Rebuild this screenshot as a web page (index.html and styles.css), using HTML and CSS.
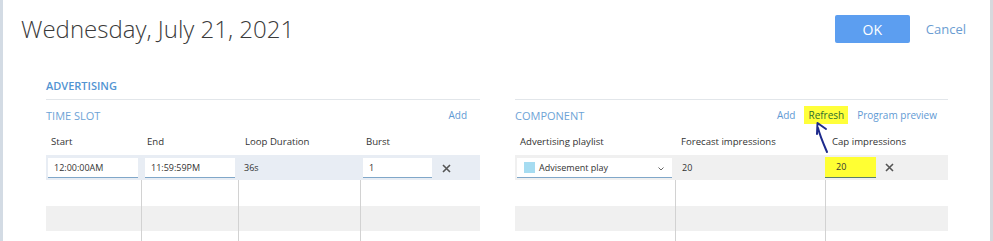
FILE: index.html
```html
<!DOCTYPE html>
<html>
<head>
<meta charset="utf-8">
<link rel="stylesheet" href="styles.css">
</head>
<body>
<div class="frame">
  <div class="header">
    <h1 class="title">Wednesday, July 21, 2021</h1>
    <div class="actions">
      <button class="btn-ok">OK</button>
      <a class="cancel">Cancel</a>
    </div>
  </div>
  <div class="panels">
    <div class="panel">
      <div class="panel-head">ADVERTISING</div>
      <div class="sub-head">
        <span class="sub-title">TIME SLOT</span>
        <div class="links"><a class="link">Add</a></div>
      </div>
      <div class="table t-left">
        <div class="row cols">
          <div class="th">Start</div>
          <div class="th">End</div>
          <div class="th">Loop Duration</div>
          <div class="th">Burst</div>
        </div>
        <div class="row body r1 blue">
          <div class="td c-start"><div class="input">12:00:00AM</div></div>
          <div class="td c-end"><div class="input">11:59:59PM</div></div>
          <div class="td c-text">36s</div>
          <div class="td c-burst"><div class="input w-burst">1</div><span class="x"><svg width="9" height="9" viewBox="0 0 9 9"><path d="M1 1L8 8M8 1L1 8" stroke="#555" stroke-width="1.6"/></svg></span></div>
        </div>
        <div class="row body r2 lined"><div class="td"></div><div class="td"></div><div class="td"></div><div class="td"></div></div>
        <div class="row body r3 grey lined"><div class="td"></div><div class="td"></div><div class="td"></div><div class="td"></div></div>
        <div class="row body r4 lined"><div class="td"></div><div class="td"></div><div class="td"></div><div class="td"></div></div>
      </div>
    </div>
    <div class="panel">
      <div class="panel-head"></div>
      <div class="sub-head right-sub">
        <span class="sub-title">COMPONENT</span>
        <div class="links">
          <a class="link">Add</a>
          <a class="link hl">Refresh</a>
          <a class="link">Program preview</a>
        </div>
      </div>
      <div class="table t-right">
        <div class="row cols">
          <div class="th">Advertising playlist</div>
          <div class="th">Forecast impressions</div>
          <div class="th">Cap impressions</div>
        </div>
        <div class="row body r1 grey">
          <div class="td c-select"><div class="input select"><span class="swatch"></span><span class="sel-text">Advisement play</span><svg class="chev" width="6" height="4" viewBox="0 0 6 4"><path d="M0.5 0.5L3 3L5.5 0.5" fill="none" stroke="#666" stroke-width="1"/></svg></div></div>
          <div class="td c-text2">20</div>
          <div class="td c-cap"><div class="input yellow">20</div><span class="x"><svg width="9" height="9" viewBox="0 0 9 9"><path d="M1 1L8 8M8 1L1 8" stroke="#555" stroke-width="1.6"/></svg></span></div>
        </div>
        <div class="row body r2 lined"><div class="td"></div><div class="td"></div><div class="td"></div></div>
        <div class="row body r3 grey lined"><div class="td"></div><div class="td"></div><div class="td"></div></div>
        <div class="row body r4 lined"><div class="td"></div><div class="td"></div><div class="td"></div></div>
      </div>
    </div>
  </div>
  <svg class="arrow" width="30" height="40" viewBox="0 0 30 40">
    <path d="M21 34 C18 27 14 18 12 10" fill="none" stroke="#1d2a8c" stroke-width="2" stroke-linecap="round"/>
    <path d="M11 16 L11.5 5 L20 11" fill="none" stroke="#1d2a8c" stroke-width="2" stroke-linecap="round" stroke-linejoin="round"/>
  </svg>
</div>
</body>
</html>
```
FILE: styles.css
```css
* { box-sizing: border-box; }
html, body { margin: 0; padding: 0; background: #fff; }
body { font-family: "Open Sans", "Noto Sans", sans-serif; color: #333; }

.frame {
  position: relative;
  width: 993px;
  height: 241px;
  overflow: hidden;
  border-left: 3px solid #d3dbe4;
  border-right: 3px solid #d6d9dd;
}

.header {
  display: flex;
  align-items: center;
  justify-content: space-between;
  height: 58px;
  padding: 0 24px 0 18px;
}
.title {
  margin: 0;
  font-size: 24px;
  font-weight: 300;
  color: #3a3a3a;
  line-height: 34px;
}
.actions { display: flex; align-items: center; gap: 16px; }
.btn-ok {
  width: 75px;
  height: 28px;
  border: 0;
  border-radius: 2px;
  background: #5c9ef0;
  color: #fff;
  font-family: inherit;
  font-size: 14px;
  padding: 0;
}
.cancel { color: #6b9dd2; font-size: 13px; }

.panels {
  display: grid;
  grid-template-columns: 434px 433px;
  column-gap: 35px;
  padding-left: 43px;
}
.panel-head {
  height: 42px;
  padding-top: 20px;
  line-height: 16px;
  font-size: 11px;
  font-weight: 600;
  color: #5294d2;
  border-bottom: 1px solid #e2e6ea;
}
.sub-head {
  display: flex;
  align-items: center;
  justify-content: space-between;
  height: 30px;
  padding-right: 13px;
}
.right-sub { padding-right: 11px; }
.sub-title { font-size: 11px; color: #6ea3d6; }
.links { display: flex; align-items: center; gap: 9px; }
.link { font-size: 10px; color: #5f9ad4; }
.hl {
  background: #ffff3a;
  color: #2e6e2e;
  padding: 2px 4px;
}

.table { display: grid; }
.t-left .row { display: grid; grid-template-columns: 95px 97px 122px 118px; }
.t-right .row { display: grid; grid-template-columns: 160px 150px 123px; }

.cols { height: 25px; align-items: center; padding-bottom: 3px; }
.th { font-size: 9.6px; color: #333; }
.t-left .th:nth-child(1) { padding-left: 5px; }
.t-left .th:nth-child(2) { padding-left: 6px; }
.t-left .th:nth-child(3) { padding-left: 7px; }
.t-left .th:nth-child(4) { padding-left: 6px; }
.t-right .th:nth-child(1) { padding-left: 5px; }
.t-right .th:nth-child(2) { padding-left: 6px; }
.t-right .th:nth-child(3) { padding-left: 7px; }

.r1 { height: 25px; }
.r2 { height: 26px; }
.r3 { height: 25px; }
.r4 { height: 20px; }
.blue { background: #e8edf4; }
.grey { background: #f0f0f0; }
.lined .td + .td { border-left: 1px solid #d2d2d2; }

.td { font-size: 9px; color: #333; }
.input {
  height: 20px;
  background: #fff;
  border-bottom: 1px solid #80a7c9;
  font-size: 9px;
  line-height: 19px;
  padding-left: 6px;
  color: #333;
}
.c-start { padding: 3px 3px 0 2px; }
.c-end { padding: 3px 3px 0 4px; }
.c-text { padding: 6px 0 0 6px; }
.c-text2 { padding: 6px 0 0 7px; }
.c-burst { display: flex; align-items: flex-start; padding: 3px 0 0 3px; }
.w-burst { width: 69px; }
.x { display: flex; align-items: center; height: 20px; margin-left: 10px; }
.c-select { padding: 3px 3px 0 2px; }
.select { display: flex; align-items: center; padding-left: 7px; }
.swatch { width: 11px; height: 11px; background: #a6dcf1; margin-right: 4px; }
.sel-text { flex: 1; }
.chev { margin-right: 8px; margin-top: 2px; }
.c-cap { display: flex; align-items: flex-start; padding: 2px 0 0 0; }
.yellow { width: 51px; height: 21px; line-height: 20px; background: #ffff33; padding-left: 11px; border-bottom-color: #5a7f6a; }
.c-cap .x { height: 21px; margin-left: 9px; }

.arrow { position: absolute; left: 803px; top: 118px; }
```
